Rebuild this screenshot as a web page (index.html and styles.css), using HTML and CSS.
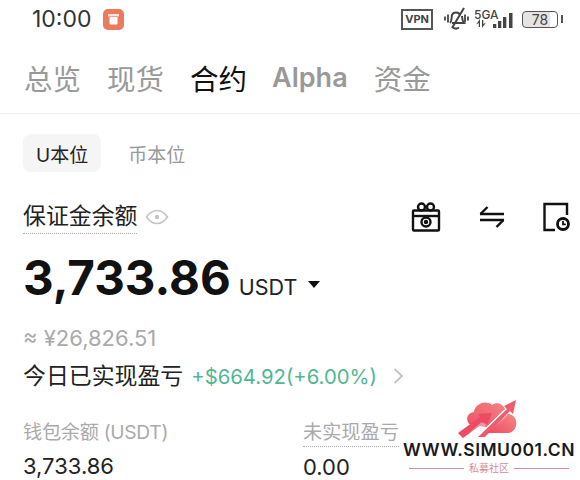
FILE: index.html
```html
<!DOCTYPE html>
<html>
<head>
    <title>合约</title>
    <meta name="viewport" content="width=device-width, initial-scale=1.0">
    <link rel="stylesheet" href="styles.css">
</head>
<body>
    <div class="layar">
        <div class="status-bar">
            <div class="status-kiri">
                <span class="jam">10:00</span>
                <span class="app-icon">
                    <svg width="21" height="21" viewBox="0 0 21 21"><rect width="21" height="21" rx="5" fill="#ec7a5c"/><rect x="5" y="5" width="11" height="2.4" fill="#fbe3dc"/><path d="M6.5 8h8v6.5a1 1 0 0 1-1 1h-6a1 1 0 0 1-1-1z" fill="#fff"/></svg>
                </span>
            </div>
            <div class="status-kanan">
                <span class="vpn">VPN</span>
                <svg class="bell" width="28" height="24" viewBox="0 0 28 24" fill="none" stroke="#444" stroke-width="2"><path d="M8 16c2-2 1.500-6 2-8 1-3.500 7-3.500 8 0M20 9c0 3 .5 5 2 7H10"/><path d="M22 1L10 21"/><path d="M11 20.500c2 1.500 4 1.500 6 0"/><path d="M3 9.500v4M6 7.500v8M23 7.500v8M26 9.500v4" stroke-width="1.800"/></svg>
                <span class="sinyal">
                    <span class="sinyal-5g">5GA</span>
                    <svg width="39" height="16" viewBox="0 0 39 16" fill="#444"><path d="M6 7v8H4.800v-4L2 12.500zM8 8h1.300v4l2.700-1.500L8 16z"/><rect x="19" y="12" width="3.300" height="4"/><rect x="24" y="9" width="3.300" height="7"/><rect x="29" y="5" width="3.300" height="11"/><rect x="35" y="1" width="3.500" height="15"/></svg>
                </span>
                <span class="baterai"><span class="baterai-isi">78</span></span>
            </div>
        </div>

        <div class="tabs">
            <span class="tab">总览</span>
            <span class="tab">现货</span>
            <span class="tab aktif">合约</span>
            <span class="tab tab-alpha">Alpha</span>
            <span class="tab">资金</span>
        </div>

        <div class="konten">
            <div class="pilihan">
                <span class="pil aktif">U本位</span>
                <span class="pil">币本位</span>
            </div>

            <div class="saldo-atas">
                <div class="saldo-judul">
                    <span class="titik-bawah">保证金余额</span>
                    <svg width="24" height="16" viewBox="0 0 24 16" fill="none" stroke="#c4c4c4" stroke-width="1.500"><path d="M1.500 8C5 3 8.500 1.500 12 1.500S19 3 22.500 8C19 13 15.500 14.500 12 14.500S5 13 1.500 8z"/><circle cx="12" cy="8" r="2.200" fill="#c4c4c4" stroke="none"/></svg>
                </div>
                <div class="aksi">
                    <svg width="30" height="30" viewBox="0 0 30 30" fill="none" stroke="#111" stroke-width="2.400" stroke-linejoin="round"><rect x="2" y="8.500" width="26" height="20" rx="1"/><path d="M2 14h26"/><circle cx="15" cy="20" r="4.500"/><circle cx="15" cy="20" r="1" fill="#111"/><circle cx="10.500" cy="5" r="3.500"/><circle cx="19.500" cy="5" r="3.500"/></svg>
                    <svg width="26" height="24" viewBox="0 0 26 24" fill="none" stroke="#111" stroke-width="2.400"><path d="M1 9h24M1 15h24"/><path d="M1.500 9L8.500 2M24.500 15L17.500 22"/></svg>
                    <svg width="28" height="30" viewBox="0 0 28 30" fill="none" stroke="#111" stroke-width="2.400"><path d="M12 28H1.500V2H24V13"/><circle cx="20" cy="22" r="5.500" stroke-width="2.800"/><path d="M20 19v3.300h2.800" stroke-width="1.800"/></svg>
                </div>
            </div>

            <div class="saldo">
                <span class="angka">3,733.86</span>
                <span class="mata-uang">USDT</span>
                <span class="segitiga"></span>
            </div>

            <div class="kira">≈ ¥26,826.51</div>

            <div class="pnl">
                <span class="pnl-judul">今日已实现盈亏</span>
                <span class="pnl-angka">+$664.92(+6.00%)</span>
                <svg width="11" height="18" viewBox="0 0 11 18" fill="none" stroke="#c2c2c2" stroke-width="1.800"><path d="M1.500 2l7.500 7-7.500 7"/></svg>
            </div>

            <div class="bawah">
                <div class="kolom">
                    <div class="kolom-judul rapat">钱包余额 (USDT)</div>
                    <div class="kolom-angka">3,733.86</div>
                </div>
                <div class="kolom">
                    <div class="kolom-judul"><span class="titik-bawah">未实现盈亏</span></div>
                    <div class="kolom-angka">0.00</div>
                </div>
            </div>
        </div>

        <div class="watermark">
            <svg width="70" height="45" viewBox="0 0 70 45">
                <defs><linearGradient id="merah" x1="0" y1="1" x2="1" y2="0"><stop offset="0" stop-color="#ee4a62"/><stop offset="1" stop-color="#f58a86"/></linearGradient></defs>
                <path d="M17 30C11 27 12 18 20 17 21 8 33 5 38 10 43 6 49 9 51 14L33 32zM54 19C60 20 63 25 62 30 61 35 58 38 52 38H36z" fill="url(#merah)"/>
                <path d="M4 38L26 22 24 19 38 18 33 30 31 27 9 43z" fill="#ee4a62"/>
                <path d="M15 38L27.500 27 33 30z" fill="#fff" opacity=".35"/>
                <path d="M22 42L50 15 53 18 30 42z" fill="#fff"/>
                <path d="M24 42L53 14 50 11 62 5 59 19 56 16 31 42z" fill="#ef5a6c"/>
                <path d="M33 38H52C58 38 61 35 62 30 63 25 60 20 55 19z" fill="url(#merah)"/>
            </svg>
            <div class="wm-url">WWW.SIMU001.CN</div>
            <div class="wm-sub"><span>私募社区</span></div>
        </div>
    </div>
</body>
</html>
```

FILE: styles.css
```css
body {
    margin: 0;
    background-color: #fff;
    font-family: Inter, "Noto Sans CJK SC", sans-serif;
    color: #111;
}

.layar {
    position: relative;
    width: 580px;
    height: 480px;
    overflow: hidden;
}

.status-bar {
    display: flex;
    justify-content: space-between;
    align-items: center;
    height: 38px;
    padding: 0 22px 0 32px;
}

.status-kiri {
    display: flex;
    align-items: center;
    gap: 11px;
}

.jam {
    font-size: 23px;
    color: #333;
}

.app-icon {
    display: flex;
}

.status-kanan {
    display: flex;
    align-items: center;
    color: #444;
}

.vpn {
    border: 2px solid #555;
    padding: 3px 2px;
    font-size: 11px;
    font-weight: 700;
    line-height: 11px;
    margin-right: 9px;
}

.bell {
    margin-right: 4px;
}

.sinyal {
    position: relative;
    display: flex;
    align-items: flex-end;
    width: 39px;
    height: 18px;
    margin-right: 9px;
}

.sinyal-5g {
    position: absolute;
    left: 0;
    top: -1px;
    font-size: 12px;
    font-weight: 500;
    line-height: 12px;
}

.baterai {
    position: relative;
    box-sizing: border-box;
    width: 36px;
    height: 17px;
    border: 1.500px solid #555;
    border-radius: 4px;
    display: flex;
    align-items: center;
    justify-content: center;
    font-size: 14px;
    background: linear-gradient(90deg, #e4e4e4 78%, #fff 78%);
}

.baterai:after {
    content: '';
    position: absolute;
    right: -6px;
    top: 3px;
    width: 2px;
    height: 8px;
    background-color: #555;
}

.tabs {
    display: flex;
    align-items: center;
    gap: 26px;
    height: 71px;
    padding: 4px 0 0 24px;
    border-bottom: 1px solid #efefef;
}

.tab {
    font-size: 28.500px;
    color: #999;
}

.tab.aktif {
    color: #111;
}

.tab-alpha {
    font-weight: 600;
    font-size: 27px;
    margin-left: -1px;
}

.konten {
    padding: 20px 9px 0 23px;
}

.pilihan {
    display: flex;
    align-items: center;
    gap: 27px;
}

.pil {
    font-size: 19px;
    color: #999;
}

.pil.aktif {
    display: flex;
    align-items: center;
    height: 38px;
    padding: 0 13px;
    border-radius: 8px;
    background-color: #f5f5f5;
    color: #222;
}

.saldo-atas {
    display: flex;
    justify-content: space-between;
    align-items: center;
    margin-top: 28px;
}

.saldo-judul {
    display: flex;
    align-items: center;
    gap: 8px;
}

.titik-bawah {
    display: inline-block;
    border-bottom: 1px dotted #aaa;
}

.saldo-judul .titik-bawah {
    font-size: 22.900px;
    line-height: 33px;
    color: #222;
}

.aksi {
    display: flex;
    align-items: center;
    gap: 38px;
}

.saldo {
    display: flex;
    align-items: baseline;
    margin-top: 14px;
}

.angka {
    font-size: 47.500px;
    font-weight: 700;
    line-height: 60px;
}

.mata-uang {
    font-size: 21.500px;
    margin-left: 8px;
    color: #222;
}

.segitiga {
    margin-left: 11px;
    border-left: 6px solid transparent;
    border-right: 6px solid transparent;
    border-top: 7px solid #111;
    transform: translateY(-7px);
}

.kira {
    margin-top: 17px;
    font-size: 22px;
    line-height: 26px;
    color: #aaa;
}

.pnl {
    display: flex;
    align-items: center;
    margin-top: 11px;
}

.pnl-judul {
    font-size: 22.900px;
    line-height: 28px;
    color: #222;
}

.pnl-angka {
    margin-left: 8px;
    font-size: 20.300px;
    color: #4fb794;
}

.pnl svg {
    margin-left: 16px;
}

.bawah {
    display: flex;
    margin-top: 28px;
}

.kolom {
    flex: none;
    width: 280px;
}

.kolom-judul {
    font-size: 19.200px;
    line-height: 28px;
    color: #aaa;
}

.rapat {
    letter-spacing: -0.300px;
}

.kolom-angka {
    margin-top: 7px;
    font-size: 22px;
    line-height: 26px;
    color: #222;
}

.watermark {
    position: absolute;
    left: 404px;
    top: 395px;
    width: 170px;
    display: flex;
    flex-direction: column;
    align-items: center;
}

.wm-url {
    font-size: 17.500px;
    font-weight: 600;
    line-height: 20px;
    letter-spacing: 0.500px;
    white-space: nowrap;
    color: #1a1a1a;
    background-color: #fff;
}

.wm-sub {
    display: flex;
    align-items: center;
    width: 160px;
    margin-top: 1px;
    font-size: 10px;
    line-height: 14px;
    color: #d98a94;
}

.wm-sub span {
    padding: 0 5px;
}

.wm-sub:before, .wm-sub:after {
    content: '';
    flex: 1;
    height: 1px;
    background-color: #d98a94;
}
```
